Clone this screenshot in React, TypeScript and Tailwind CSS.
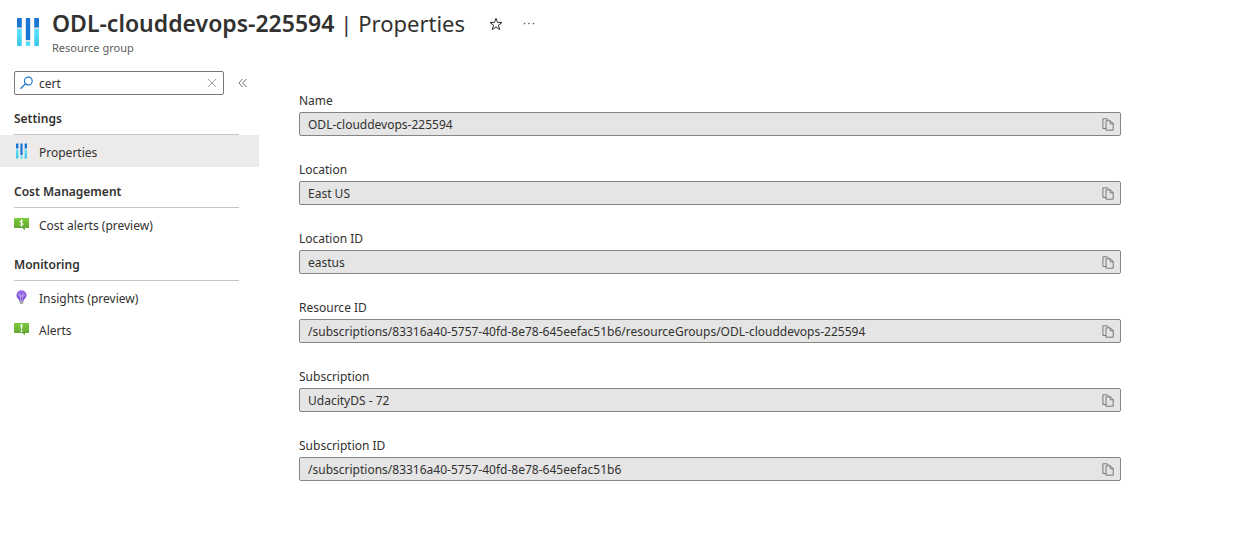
import { useState } from "react";

type IconProps = { className?: string };

function PropertiesIcon({ className }: IconProps) {
  return (
    <svg viewBox="0 0 22 30" preserveAspectRatio="none" className={className} aria-hidden="true">
      <defs>
        <linearGradient id="bar-light" x1="0" y1="1" x2="0" y2="0">
          <stop offset="0" stopColor="#38c4e6" />
          <stop offset="0.7" stopColor="#5ae0fc" />
        </linearGradient>
      </defs>
      <rect x="0" y="11" width="4.8" height="18" rx="1" fill="url(#bar-light)" />
      <rect x="0" y="1" width="4.8" height="10" rx="0.5" fill="#1976d4" />
      <rect x="0" y="10.5" width="4.8" height="1.5" fill="#e6e6e6" />
      <rect x="8.8" y="24" width="4.4" height="5" rx="1" fill="#55dff8" />
      <rect x="8.8" y="1" width="4.4" height="22" rx="0.5" fill="#1976d4" />
      <rect x="8.3" y="23" width="5.4" height="1.5" fill="#e6e6e6" />
      <rect x="17.2" y="11" width="4.8" height="18" rx="1" fill="url(#bar-light)" />
      <rect x="17.2" y="1" width="4.8" height="10" rx="0.5" fill="#1976d4" />
      <rect x="17.2" y="10.5" width="4.8" height="1.5" fill="#e6e6e6" />
    </svg>
  );
}

function AlertBubble({ children }: { children: React.ReactNode }) {
  return (
    <svg viewBox="0 0 15 15" className="size-[15px]" aria-hidden="true">
      <defs>
        <linearGradient id="bubble-green" x1="0" y1="0" x2="0" y2="1">
          <stop offset="0" stopColor="#7ccb3c" />
          <stop offset="1" stopColor="#619f32" />
        </linearGradient>
      </defs>
      <path d="M.4 1h14.2q.4 0 .4.4v9.2q0 .4-.4.4H11v2.2L8.3 11H.4q-.4 0-.4-.4V1.4Q0 1 .4 1z" fill="url(#bubble-green)" />
      {children}
    </svg>
  );
}

function CostAlertIcon() {
  return (
    <AlertBubble>
      <path d="M9.2 4.3C8.7 3.8 8.1 3.6 7.5 3.6c-.9 0-1.5.4-1.5 1.1 0 1.5 3.2.9 3.2 2.5 0 .8-.7 1.2-1.7 1.2-.7 0-1.4-.3-1.8-.8M7.5 2.4v7.2" fill="none" stroke="#fff" strokeWidth="1" />
    </AlertBubble>
  );
}

function AlertIcon() {
  return (
    <AlertBubble>
      <path d="M6.5 2.3h2L8.1 7.2H6.9z" fill="#fff" />
      <circle cx="7.5" cy="9" r="0.9" fill="#fff" />
    </AlertBubble>
  );
}

function InsightsIcon() {
  return (
    <svg viewBox="0 0 15 15" className="size-[15px]" aria-hidden="true">
      <defs>
        <linearGradient id="bulb-purple" x1="0" y1="0" x2="0" y2="1">
          <stop offset="0" stopColor="#9a70ec" />
          <stop offset="1" stopColor="#7147c9" />
        </linearGradient>
      </defs>
      <path d="M7.5.2a5 5 0 0 0-5.1 5c0 2.6 2.7 3.6 3 5.5h4.2c.3-1.9 3-2.9 3-5.5a5 5 0 0 0-5.1-5z" fill="url(#bulb-purple)" />
      <path d="M6.6 10.5V6.1H5.5a1 1 0 1 1 1.1-1v1h1.8v-1a1 1 0 1 1 1.1 1H8.4v4.4" fill="none" stroke="#dcc9ff" strokeWidth="0.6" />
      <path d="M5.5 11h4v1.7L8.4 14H6.6l-1.1-1.3z" fill="#a5a5a5" />
    </svg>
  );
}

function SearchIcon() {
  return (
    <svg viewBox="0 0 14 14" className="size-[14px] shrink-0" fill="none" stroke="#1c74d2" strokeWidth="1.1" aria-hidden="true">
      <circle cx="8.3" cy="5" r="3.9" />
      <path d="M5.5 7.8.5 12.8" strokeWidth="1.3" />
    </svg>
  );
}

function ClearIcon() {
  return (
    <svg viewBox="0 0 10 10" className="size-[10px]" fill="none" stroke="#8a8886" strokeWidth="0.8" aria-hidden="true">
      <path d="m.8.8 8.4 8.4M9.2.8.8 9.2" />
    </svg>
  );
}

function CollapseIcon() {
  return (
    <svg viewBox="0 0 10 10" className="size-[10px]" fill="none" stroke="#605e5c" strokeWidth="0.9" aria-hidden="true">
      <path d="M4.6 1 .9 5l3.7 4M8.4 1 4.7 5l3.7 4" />
    </svg>
  );
}

function StarIcon() {
  return (
    <svg viewBox="0 0 14 14" className="size-[14px]" fill="none" stroke="#323130" strokeWidth="1" aria-hidden="true">
      <path d="m7 1.3 1.5 4.1 4.5.1-3.6 2.7 1.3 4.4L7 10l-3.7 2.6 1.3-4.4L1 5.5l4.5-.1z" />
    </svg>
  );
}

function MoreIcon() {
  return (
    <svg viewBox="0 0 12 4" className="h-1 w-3" fill="#605e5c" aria-hidden="true">
      <circle cx="1.5" cy="1.6" r="0.8" />
      <circle cx="6" cy="1.6" r="0.8" />
      <circle cx="10.5" cy="1.6" r="0.8" />
    </svg>
  );
}

function CopyIcon() {
  return (
    <svg viewBox="0 0 12 13" className="h-[13px] w-3" fill="none" stroke="#605e5c" strokeWidth="0.8" aria-hidden="true">
      <path d="M4 10.5H.9V.8h4.4l1.4 1.4" />
      <path d="M4 2.8h4.4l2.8 2.8v6.6H4zM8.2 2.8v3h3" />
    </svg>
  );
}

const sections = [
  {
    title: "Settings",
    items: [{ label: "Properties", icon: <PropertiesIcon className="h-4 w-[11px]" />, active: true }],
  },
  {
    title: "Cost Management",
    items: [{ label: "Cost alerts (preview)", icon: <CostAlertIcon />, active: false }],
  },
  {
    title: "Monitoring",
    items: [
      { label: "Insights (preview)", icon: <InsightsIcon />, active: false },
      { label: "Alerts", icon: <AlertIcon />, active: false },
    ],
  },
];

const fields = [
  { id: "name", label: "Name", value: "ODL-clouddevops-225594" },
  { id: "location", label: "Location", value: "East US" },
  { id: "location-id", label: "Location ID", value: "eastus" },
  {
    id: "resource-id",
    label: "Resource ID",
    value: "/subscriptions/83316a40-5757-40fd-8e78-645eefac51b6/resourceGroups/ODL-clouddevops-225594",
  },
  { id: "subscription", label: "Subscription", value: "UdacityDS - 72" },
  { id: "subscription-id", label: "Subscription ID", value: "/subscriptions/83316a40-5757-40fd-8e78-645eefac51b6" },
];

function Sidebar() {
  const [query, setQuery] = useState("cert");
  return (
    <aside className="w-[259px] shrink-0">
      <div className="flex items-center pl-[14px]">
        <div className="flex h-6 w-[210px] items-center rounded-xs border border-[#7a7876] bg-white pr-[6px] pl-[5px]">
          <SearchIcon />
          <input
            type="text"
            aria-label="Search menu"
            value={query}
            onChange={(e) => setQuery(e.target.value)}
            className="h-full min-w-0 flex-1 pt-px pl-[5px] outline-none"
          />
          <button type="button" aria-label="Clear search" onClick={() => setQuery("")}>
            <ClearIcon />
          </button>
        </div>
        <button type="button" aria-label="Collapse menu" className="ml-[14px]">
          <CollapseIcon />
        </button>
      </div>
      <nav className="mt-4 flex flex-col gap-[17px]">
        {sections.map((section) => (
          <section key={section.title}>
            <h2 className="mr-5 ml-[14px] border-b border-[#c8c6c4] pb-[7px] leading-4 font-semibold">{section.title}</h2>
            <ul>
              {section.items.map((item) => (
                <li key={item.label}>
                  <a
                    href="#"
                    aria-current={item.active ? "page" : undefined}
                    className={`flex h-8 items-center gap-[10px] pl-[14px] ${item.active ? "bg-[#edebe9]" : ""}`}
                  >
                    <span className="flex w-[15px] justify-center">{item.icon}</span>
                    <span className="pt-[3px]">{item.label}</span>
                  </a>
                </li>
              ))}
            </ul>
          </section>
        ))}
      </nav>
    </aside>
  );
}

function PropertyField({ id, label, value }: { id: string; label: string; value: string }) {
  return (
    <div>
      <label htmlFor={id} className="mb-[2px] block leading-[18px]">
        {label}
      </label>
      <div className="flex h-6 items-center rounded-xs border border-[#868482] bg-[#e5e5e5] pr-[6px] pl-2">
        <input
          id={id}
          type="text"
          readOnly
          value={value}
          className="h-full min-w-0 flex-1 bg-transparent pt-px outline-none"
        />
        <button type="button" aria-label={`Copy ${label}`} onClick={() => navigator.clipboard?.writeText(value)}>
          <CopyIcon />
        </button>
      </div>
    </div>
  );
}

export default function App() {
  return (
    <div className="min-h-screen bg-white font-['Noto_Sans','Open_Sans',sans-serif] text-[12px] text-[#323130]">
      <header className="flex h-[71px] items-start pl-[17px]">
        <PropertiesIcon className="mt-[17px] h-[30px] w-[22px]" />
        <div className="ml-[13px] pt-[7px]">
          <h1 className="text-[23px] leading-8 font-semibold">
            ODL-clouddevops-225594 <span className="text-[22px] font-normal">| Properties</span>
          </h1>
          <p className="text-[11px] leading-[18px] text-[#605e5c]">Resource group</p>
        </div>
        <div className="ml-6 flex h-12 items-center gap-5">
          <button type="button" aria-label="Add to favorites">
            <StarIcon />
          </button>
          <button type="button" aria-label="More actions">
            <MoreIcon />
          </button>
        </div>
      </header>
      <div className="flex">
        <Sidebar />
        <main className="flex max-w-[862px] min-w-0 flex-1 flex-col gap-[25px] pt-[21px] pl-10">
          {fields.map((field) => (
            <PropertyField key={field.id} {...field} />
          ))}
        </main>
      </div>
    </div>
  );
}
